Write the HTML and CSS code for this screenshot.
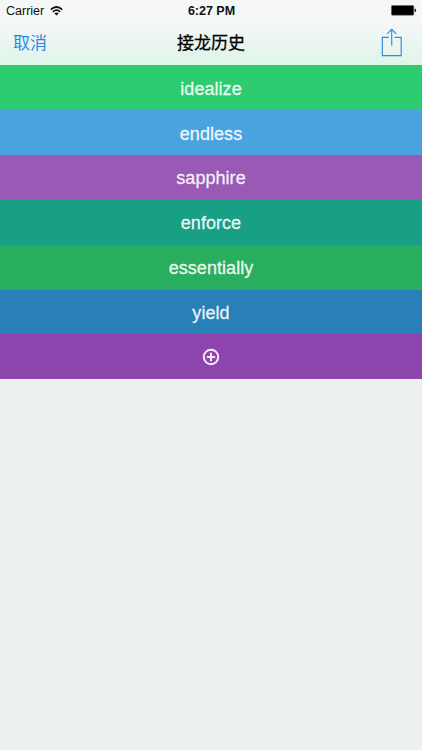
FILE: index.html
```html
<!DOCTYPE html>
<html lang="zh-CN">
<head>
<meta charset="utf-8">
<title>接龙历史</title>
<link rel="stylesheet" href="styles.css">
</head>
<body>
<header class="top">
  <div class="status">
    <div class="carrier"><span>Carrier</span>
      <svg class="wifi" width="13" height="10" viewBox="0 0 13 10"><g fill="none" stroke="#111" stroke-width="1.7"><path d="M.8 3.6Q6.5-1.6 12.2 3.6M2.9 5.9Q6.5 2.5 10.1 5.9"/></g><path fill="#111" d="M4.4 7.4Q6.5 5.6 8.6 7.4L6.5 9.5z"/></svg>
    </div>
    <time class="clock">6:27 PM</time>
    <svg class="battery" width="26" height="11" viewBox="0 0 26 11"><rect x=".4" y=".4" width="22.4" height="9.8" rx="1.2" fill="#000" stroke="#666" stroke-width=".5"/><path d="M23.6 3.7h.7q.8.2.8 1.6t-.8 1.6h-.7z" fill="#111"/></svg>
  </div>
  <nav class="nav">
    <a class="cancel">取消</a>
    <h1 class="title">接龙历史</h1>
    <svg class="share" width="22" height="30" viewBox="0 0 22 30"><path d="M7.8 9.3H1.3v18.3h18.9V9.3h-6.5M10.7 17.4V1.4M6.2 5.8l4.5-4.5 4.5 4.5" fill="none" stroke="#3289e4" stroke-width="1.15"/></svg>
  </nav>
</header>
<main class="list">
  <div class="row emerald">idealize</div>
  <div class="row blue">endless</div>
  <div class="row amethyst">sapphire</div>
  <div class="row teal">enforce</div>
  <div class="row green">essentially</div>
  <div class="row ocean">yield</div>
  <div class="row purple">
    <svg width="18" height="18" viewBox="0 0 18 18"><g fill="none" stroke="#f5eaf8" stroke-width="2"><circle cx="9" cy="9" r="7.2"/><path d="M9 4.8v8.4M4.8 9h8.4"/></g></svg>
  </div>
</main>
</body>
</html>
```
FILE: styles.css
```css
* { box-sizing: border-box; }
body {
  margin: 0;
  min-height: 750px;
  background: #ecf0f1;
  font-family: "Liberation Sans", "Noto Sans CJK SC", sans-serif;
}
svg { display: block; }
.top {
  height: 65.2px;
  background: linear-gradient(#f6f7f9 0, #f5f7f8 35%, #def5e8 100%);
}
.status {
  height: 22px;
  display: grid;
  grid-template-columns: 1fr auto 1fr;
  align-items: center;
  padding: 0 5px 0 6px;
  font-size: 12.5px;
  color: #111;
}
.carrier { display: flex; align-items: center; gap: 6px; letter-spacing: 0; }
.clock { font-weight: bold; font-size: 12.5px; }
.battery { justify-self: end; margin-top: -1px; }
.nav {
  height: 43px;
  display: grid;
  grid-template-columns: 1fr auto 1fr;
  align-items: center;
  padding: 1px 13px 0;
}
.cancel { font-size: 17px; line-height: 24px; color: #2c86ea; }
.title {
  margin: 0;
  font-size: 17px;
  font-weight: 400;
  line-height: 24px;
  color: #000;
  -webkit-text-stroke: .3px #000;
}
.share { justify-self: end; margin: -2px 6px 0 0; }
.row {
  height: 44.8px;
  display: flex;
  align-items: center;
  justify-content: center;
  padding-top: 2.6px;
  font-size: 18px;
  letter-spacing: .05px;
  color: rgba(255, 255, 255, .9);
  -webkit-text-stroke: .3px rgba(255, 255, 255, .9);
}
.emerald { background: #2ecc71; height: 45.2px; }
.blue { background: #4aa3df; }
.amethyst { background: #9b59b6; }
.teal { background: #18a085; }
.green { background: #29ae60; }
.ocean { background: #2980b9; }
.purple { background: #8e44ad; padding-top: 0; }
```
